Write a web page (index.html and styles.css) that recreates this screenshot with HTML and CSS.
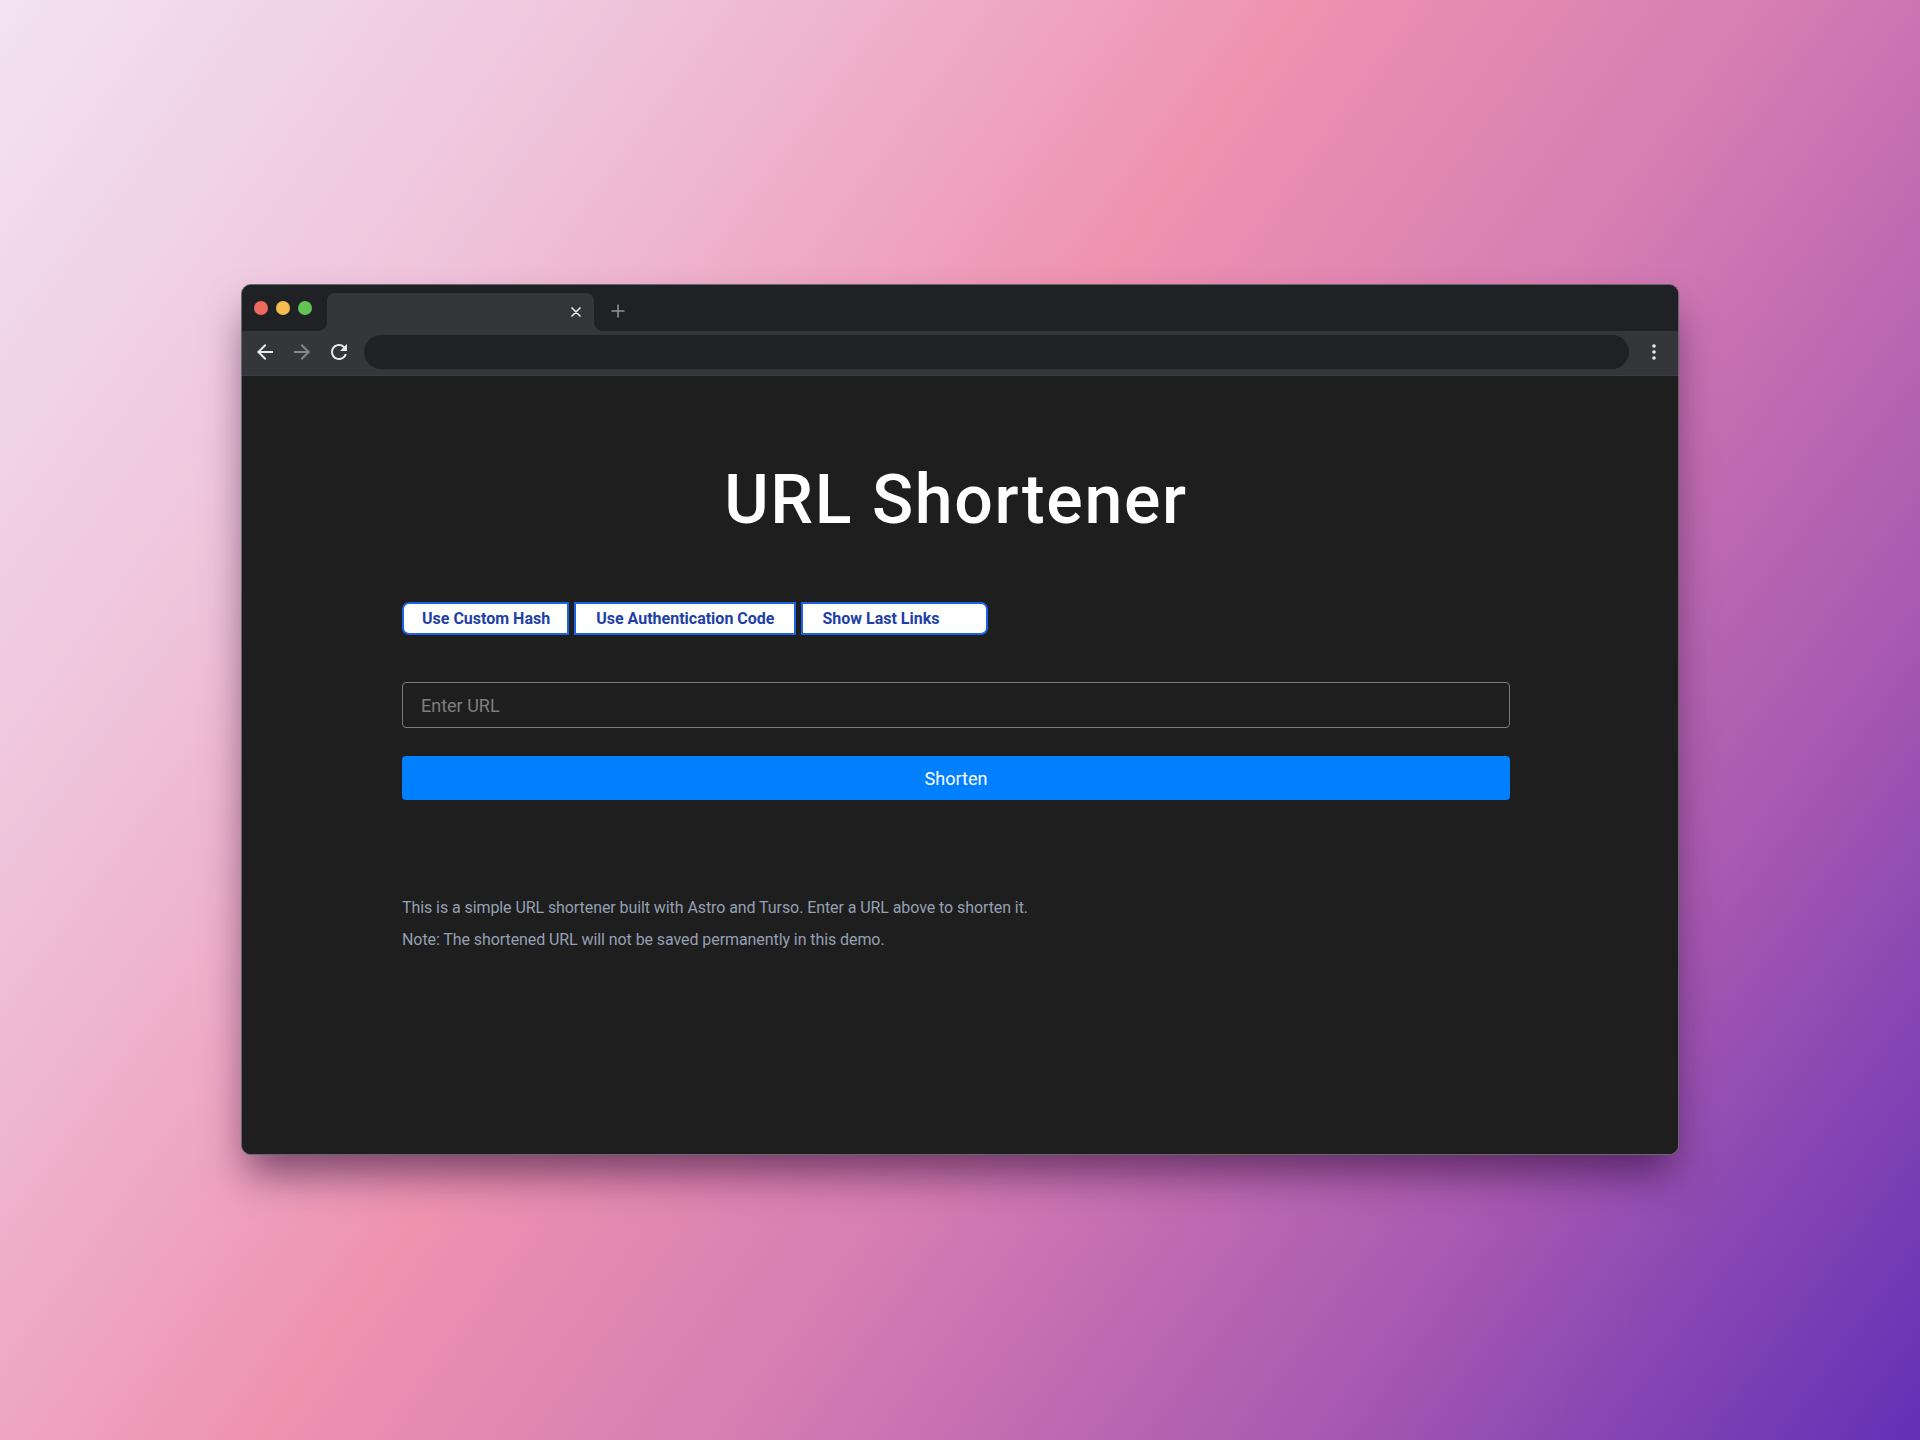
FILE: index.html
```html
<!DOCTYPE html>
<html lang="en">
<head>
<meta charset="utf-8">
<title>URL Shortener</title>
<link rel="stylesheet" href="styles.css">
</head>
<body>
<div class="window">
  <div class="tabstrip">
    <div class="lights">
      <span class="light red"></span>
      <span class="light yellow"></span>
      <span class="light green"></span>
    </div>
    <div class="tab">
      <svg class="tab-close" width="10" height="10" viewBox="0 0 10 10"><path d="M1 1L9 9M9 1L1 9" stroke="#e8eaed" stroke-width="1.7" stroke-linecap="round"/></svg>
    </div>
    <svg class="newtab" width="14" height="14" viewBox="0 0 14 14"><path d="M7 0.5V13.5M0.5 7H13.5" stroke="#8e9196" stroke-width="1.6"/></svg>
  </div>
  <div class="toolbar">
    <svg class="tool" width="24" height="24" viewBox="0 0 24 24"><path d="M20 11H7.83l5.59-5.59L12 4l-8 8 8 8 1.41-1.41L7.83 13H20v-2z" fill="#e8eaed"/></svg>
    <svg class="tool" width="24" height="24" viewBox="0 0 24 24"><path d="M4 11h12.17l-5.59-5.59L12 4l8 8-8 8-1.41-1.41L16.17 13H4v-2z" fill="#85878b"/></svg>
    <svg class="tool" width="24" height="24" viewBox="0 0 24 24"><path d="M17.65 6.35A7.958 7.958 0 0 0 12 4c-4.42 0-7.99 3.58-7.99 8s3.57 8 7.99 8c3.73 0 6.84-2.55 7.73-6h-2.08A5.99 5.99 0 0 1 12 18c-3.31 0-6-2.690-6-6s2.69-6 6-6c1.66 0 3.14.69 4.22 1.78L13 11h7V4l-2.35 2.35z" fill="#e8eaed"/></svg>
    <div class="address"></div>
    <svg class="tool" width="24" height="24" viewBox="0 0 24 24"><circle cx="12" cy="6" r="1.8" fill="#e8eaed"/><circle cx="12" cy="12" r="1.8" fill="#e8eaed"/><circle cx="12" cy="18" r="1.8" fill="#e8eaed"/></svg>
  </div>
  <main class="page">
    <h1 class="title">URL Shortener</h1>
    <div class="options">
      <button class="opt opt-first">Use Custom Hash</button>
      <button class="opt opt-mid">Use Authentication Code</button>
      <button class="opt opt-last">Show Last Links</button>
    </div>
    <form class="shorten-form">
      <input class="url-input" type="text" placeholder="Enter URL">
      <button class="shorten-btn" type="button">Shorten</button>
    </form>
    <div class="info">
      <p>This is a simple URL shortener built with Astro and Turso. Enter a URL above to shorten it.</p>
      <p>Note: The shortened URL will not be saved permanently in this demo.</p>
    </div>
  </main>
</div>
</body>
</html>
```

FILE: styles.css
```css
* { box-sizing: border-box; }
html, body { margin: 0; }
body {
  width: 1920px;
  height: 1440px;
  padding: 284px 241px 0;
  background: linear-gradient(126deg, #f2e3f3 0%, #efc2da 22%, #ee92b0 44%, #d67db3 60%, #aa5ab1 79%, #6230b6 100%);
  font-family: Roboto, "Open Sans", sans-serif;
  overflow: hidden;
}
.window {
  width: 1438px;
  height: 871px;
  border: 1px solid #67686b;
  border-radius: 10px;
  overflow: hidden;
  background: #1e1e1e;
  box-shadow: 0 24px 40px -6px rgba(40, 10, 50, 0.6);
  display: flex;
  flex-direction: column;
}
.tabstrip {
  flex: none;
  height: 46px;
  background: #202124;
  display: flex;
  align-items: flex-end;
}
.lights {
  align-self: flex-start;
  display: flex;
  gap: 8px;
  margin: 16px 0 0 12px;
}
.light { width: 14px; height: 14px; border-radius: 50%; }
.red { background: #ee6a5f; }
.yellow { background: #f5bd4f; }
.green { background: #61c454; }
.tab {
  position: relative;
  width: 267px;
  height: 38px;
  margin-left: 15px;
  background: #35363a;
  border-radius: 8px 8px 0 0;
  display: flex;
  justify-content: flex-end;
  align-items: flex-start;
  padding: 14px 13px 0 0;
}
.tab::before, .tab::after {
  content: "";
  position: absolute;
  bottom: 0;
  width: 8px;
  height: 8px;
}
.tab::before { left: -8px; background: radial-gradient(circle at 0 0, transparent 7.5px, #35363a 8px); }
.tab::after { right: -8px; background: radial-gradient(circle at 100% 0, transparent 7.5px, #35363a 8px); }
.newtab { align-self: flex-start; margin: 19px 0 0 17px; }
.toolbar {
  flex: none;
  height: 45px;
  background: #35363a;
  display: flex;
  align-items: flex-start;
  gap: 13px;
  padding: 4px 0 0 11px;
  border-bottom: 1px solid #3b3c40;
}
.tool { flex: none; margin-top: 5px; }
.address {
  width: 1265px;
  height: 34px;
  border-radius: 17px;
  background: #202124;
}
.page {
  flex: 1;
  padding: 90px 168px 0 160px;
  background: #1e1e1e;
}
.title {
  margin: 0;
  font-size: 68px;
  line-height: 68px;
  font-weight: 500;
  color: #ffffff;
  text-align: center;
  letter-spacing: 1.7px;
}
.options {
  margin-top: 68px;
  display: flex;
  gap: 5px;
}
.opt {
  height: 33px;
  background: #ffffff;
  border: 2px solid #1c62e6;
  color: #1e3fa6;
  font-family: Roboto, sans-serif;
  font-weight: 700;
  font-size: 16px;
  padding: 0 17px 0 18px;
  border-radius: 0;
  cursor: pointer;
}
.opt-first { border-radius: 7px 0 0 7px; }
.opt-mid { padding: 0 20px; }
.opt-last { border-radius: 0 7px 7px 0; padding: 0 46px 0 19px; }
.shorten-form {
  margin-top: 47px;
  display: flex;
  flex-direction: column;
  gap: 28px;
}
.url-input {
  height: 46px;
  border: 1px solid #7b7b7b;
  border-radius: 4px;
  background: #1e1e1e;
  padding: 0 18px;
  font-family: Roboto, sans-serif;
  font-size: 18px;
  color: #e0e0e0;
  outline: none;
}
.url-input::placeholder { color: #7e7e7e; }
.shorten-btn {
  height: 44px;
  border: none;
  border-radius: 4px;
  background: #0080ff;
  color: #ffffff;
  font-family: Roboto, sans-serif;
  font-size: 18px;
  cursor: pointer;
}
.info {
  margin-top: 92px;
  color: #94a0b4;
  font-size: 16px;
  letter-spacing: -0.08px;
}
.info p { margin: 0; line-height: 32px; }
```
